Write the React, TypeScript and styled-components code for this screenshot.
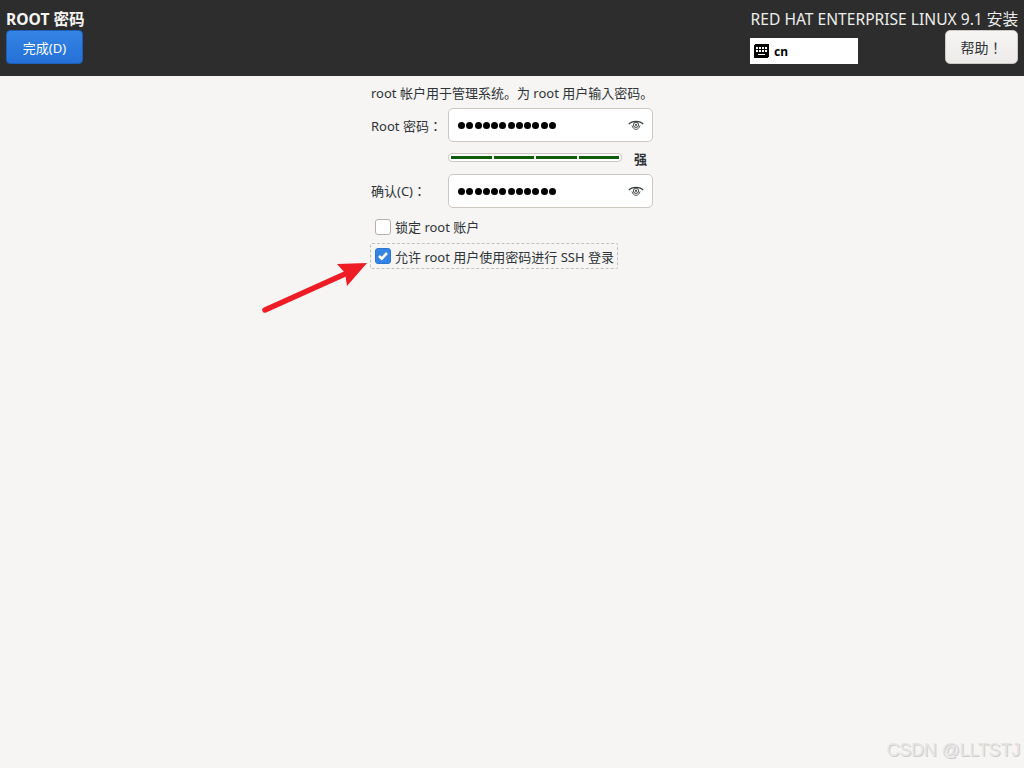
import React from "react";
import styled, { createGlobalStyle } from "styled-components";

const FONT = `"Noto Sans", "Noto Sans CJK JP", sans-serif`;

const Global = createGlobalStyle`
  html, body { margin: 0; padding: 0; background: #f6f5f4; }
  body { font-family: ${FONT}; font-size: 13px; color: #2e3436; }
  * { box-sizing: border-box; }
`;

const Page = styled.div`
  position: relative;
  width: 1024px;
  height: 768px;
  overflow: hidden;
  background: #f6f5f4;
`;

const Header = styled.header`
  height: 76px;
  background: #2d2d2d;
  display: flex;
  justify-content: space-between;
  padding: 9px 6px 12px;
`;

const HeaderLeft = styled.div`
  display: flex;
  flex-direction: column;
  align-items: flex-start;
`;

const Title = styled.div`
  height: 21px;
  line-height: 20px;
  font-size: 15.6px;
  font-weight: 700;
  color: #f6f5f4;
  white-space: nowrap;
`;

const DoneButton = styled.div`
  width: 77px;
  height: 34px;
  border-radius: 4px;
  border: 1px solid #1b5fb8;
  background: linear-gradient(#3584e4, #2470d8);
  color: #fff;
  font-size: 13px;
  display: flex;
  align-items: center;
  justify-content: center;
`;

const HeaderRight = styled.div`
  display: flex;
  flex-direction: column;
  align-items: flex-end;
  width: 268px;
`;

const Product = styled.div`
  height: 21px;
  line-height: 20px;
  font-size: 15.6px;
  color: #eeeeec;
  white-space: nowrap;
`;

const ToolRow = styled.div`
  width: 100%;
  height: 34px;
  display: flex;
  justify-content: space-between;
  align-items: flex-end;
`;

const Keyboard = styled.div`
  width: 108px;
  height: 26px;
  background: #fff;
  display: flex;
  align-items: center;
  gap: 5px;
  padding-left: 4px;
  color: #000;
  font-size: 12px;
  font-weight: 700;
`;

const HelpButton = styled.div`
  width: 73px;
  height: 34px;
  align-self: flex-start;
  border-radius: 5px;
  border: 1px solid #cdc7c2;
  background: linear-gradient(#f6f5f4, #edebe9);
  color: #2e3436;
  font-size: 14px;
  display: flex;
  align-items: center;
  justify-content: center;
`;

const Form = styled.main`
  width: 300px;
  margin-left: 371px;
  padding-top: 8px;
  display: flex;
  flex-direction: column;
`;

const Intro = styled.div`
  height: 18px;
  line-height: 18px;
  font-size: 13px;
  white-space: nowrap;
`;

const FieldRow = styled.div<{ $gap: number }>`
  display: flex;
  align-items: center;
  height: 34px;
  margin-top: ${(p) => p.$gap}px;
`;

const FieldLabel = styled.div<{ $drop?: boolean }>`
  width: 77px;
  padding-top: ${(p) => (p.$drop ? 2 : 0)}px;
  font-size: 13px;
  line-height: 18px;
  white-space: nowrap;
`;

const Input = styled.div`
  width: 205px;
  height: 34px;
  background: #fff;
  border: 1px solid #cdc7c2;
  border-radius: 5px;
  display: flex;
  align-items: center;
  justify-content: space-between;
  padding: 0 8px 0 9px;
`;

const Dots = styled.div`
  display: flex;
  gap: 1.27px;
`;

const Dot = styled.span`
  width: 7px;
  height: 7px;
  border-radius: 50%;
  background: #000;
`;

const StrengthRow = styled.div`
  display: flex;
  align-items: flex-start;
  margin: 9px 0 9px 77px;
  height: 14px;
`;

const Meter = styled.div`
  width: 174px;
  height: 9px;
  margin-top: 2px;
  border: 1px solid #cdc7c2;
  border-radius: 4px;
  background: #fff;
  display: flex;
  align-items: center;
  gap: 2px;
  padding: 0 2px;
`;

const MeterBlock = styled.span`
  flex: 1;
  height: 3px;
  background: #0c5c0c;
`;

const Strength = styled.div`
  margin-left: 12px;
  font-size: 13px;
  line-height: 16px;
  font-weight: 700;
`;

const CheckRow = styled.div<{ $focus?: boolean; $gap: number }>`
  display: flex;
  align-items: center;
  gap: 4px;
  height: 26px;
  line-height: 18px;
  width: ${(p) => (p.$focus ? "248px" : "auto")};
  margin-left: -1px;
  margin-top: ${(p) => p.$gap}px;
  padding-left: 4px;
  border: 1px ${(p) => (p.$focus ? "dashed #c4c0bb" : "solid transparent")};
  border-radius: 2px;
  font-size: 13px;
  white-space: nowrap;
`;

const CheckText = styled.span<{ $drop?: boolean }>`
  padding-top: ${(p) => (p.$drop ? 2 : 0)}px;
`;

const Box = styled.span<{ $on?: boolean }>`
  width: 16px;
  height: 16px;
  border-radius: 3px;
  display: flex;
  align-items: center;
  justify-content: center;
  background: ${(p) => (p.$on ? "#3584e4" : "#fff")};
  border: 1px solid ${(p) => (p.$on ? "#2a76d6" : "#b6b0aa")};
`;

const Arrow = styled.svg`
  position: absolute;
  left: 255px;
  top: 255px;
`;

const Watermark = styled.div`
  position: absolute;
  right: 4px;
  top: 740px;
  font-family: "Liberation Sans", sans-serif;
  font-size: 18px;
  letter-spacing: -0.2px;
  color: #e6e5e3;
  text-shadow: 1px 1px 0 #cfcecc;
  white-space: nowrap;
`;

const Eye = () => (
  <svg width="16" height="10" viewBox="0 0 16 10" fill="none" stroke="#3a3f40">
    <path d="M0.8 4.2C4 0.4 12 0.4 15.2 4.2" strokeWidth="1.3" />
    <path d="M4 5.5C4.6 7.6 6 9.4 8 9.4S11.4 7.6 12 5.5" strokeWidth="0.9" />
    <circle cx="8" cy="4.8" r="2.6" strokeWidth="1" />
    <circle cx="8" cy="4.8" r="1.1" fill="#3a3f40" stroke="none" />
  </svg>
);

const KeyboardIcon = () => (
  <svg width="15" height="14" viewBox="0 0 15 14" shapeRendering="crispEdges">
    <rect x="0" y="0" width="15" height="14" rx="2" fill="#000" />
    <g fill="#fff">
      <rect x="2" y="3" width="2" height="2" />
      <rect x="5" y="3" width="2" height="2" />
      <rect x="8" y="3" width="2" height="2" />
      <rect x="11" y="3" width="2" height="2" />
      <rect x="2" y="6" width="2" height="2" />
      <rect x="5" y="6" width="2" height="2" />
      <rect x="8" y="6" width="2" height="2" />
      <rect x="11" y="6" width="2" height="2" />
      <rect x="4" y="10" width="7" height="1" />
    </g>
  </svg>
);

const Password = () => (
  <Input>
    <Dots>
      {Array.from({ length: 12 }).map((_, i) => (
        <Dot key={i} />
      ))}
    </Dots>
    <Eye />
  </Input>
);

export default function App() {
  return (
    <Page>
      <Global />
      <Header>
        <HeaderLeft>
          <Title>ROOT 密码</Title>
          <DoneButton>完成(D)</DoneButton>
        </HeaderLeft>
        <HeaderRight>
          <Product>RED HAT ENTERPRISE LINUX 9.1 安装</Product>
          <ToolRow>
            <Keyboard>
              <KeyboardIcon />
              cn
            </Keyboard>
            <HelpButton>帮助！</HelpButton>
          </ToolRow>
        </HeaderRight>
      </Header>
      <Form>
        <Intro>root 帐户用于管理系统。为 root 用户输入密码。</Intro>
        <FieldRow $gap={6}>
          <FieldLabel $drop>Root 密码：</FieldLabel>
          <Password />
        </FieldRow>
        <StrengthRow>
          <Meter>
            <MeterBlock />
            <MeterBlock />
            <MeterBlock />
            <MeterBlock />
          </Meter>
          <Strength>强</Strength>
        </StrengthRow>
        <FieldRow $gap={0}>
          <FieldLabel>确认(C)：</FieldLabel>
          <Password />
        </FieldRow>
        <CheckRow $gap={6}>
          <Box />
          <CheckText>锁定 root 账户</CheckText>
        </CheckRow>
        <CheckRow $focus $gap={3}>
          <Box $on>
            <svg width="12" height="10" viewBox="0 0 12 10" fill="none" stroke="#fff" strokeWidth="2.6">
              <path d="M2 5L4.8 7.6L10 2" />
            </svg>
          </Box>
          <CheckText $drop>允许 root 用户使用密码进行 SSH 登录</CheckText>
        </CheckRow>
      </Form>
      <Arrow width="120" height="62" viewBox="0 0 120 62">
        <line x1="10" y1="55" x2="90" y2="19" stroke="#ee1c25" strokeWidth="5.5" strokeLinecap="round" />
        <polygon points="112,8 82,9 90,18 92,31" fill="#ee1c25" />
      </Arrow>
      <Watermark>CSDN @LLTSTJ</Watermark>
    </Page>
  );
}
